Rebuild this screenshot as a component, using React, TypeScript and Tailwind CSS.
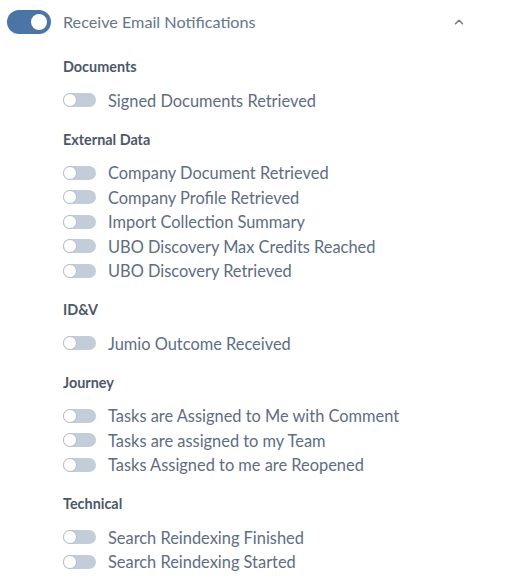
import { ChevronUp } from "lucide-react";

type Section = {
  title: string;
  items: string[];
};

const sections: Section[] = [
  { title: "Documents", items: ["Signed Documents Retrieved"] },
  {
    title: "External Data",
    items: [
      "Company Document Retrieved",
      "Company Profile Retrieved",
      "Import Collection Summary",
      "UBO Discovery Max Credits Reached",
      "UBO Discovery Retrieved",
    ],
  },
  { title: "ID&V", items: ["Jumio Outcome Received"] },
  {
    title: "Journey",
    items: [
      "Tasks are Assigned to Me with Comment",
      "Tasks are assigned to my Team",
      "Tasks Assigned to me are Reopened",
    ],
  },
  {
    title: "Technical",
    items: ["Search Reindexing Finished", "Search Reindexing Started"],
  },
];

const SmallToggle = () => (
  <div className="relative h-[14px] w-[33px] shrink-0 rounded-full bg-[#c2cdd9]">
    <div className="absolute left-0 top-0 h-[14px] w-[14px] rounded-full border border-[#b3bfcc] bg-white" />
  </div>
);

const MainToggle = () => (
  <div className="relative h-[24px] w-[44px] shrink-0 rounded-full bg-[#4a75a6]">
    <div className="absolute right-[2px] top-[2px] h-[20px] w-[20px] rounded-full border-2 border-[#4a75a6] bg-white" />
  </div>
);

export default function App() {
  return (
    <div className="min-h-screen w-[512px] bg-white font-['Lato','Liberation_Sans',sans-serif]">
      <div className="flex h-[44px] items-center pl-[7px] pr-[46px]">
        <MainToggle />
        <span className="ml-[12px] flex-1 text-[16.2px] text-[#66768a]">
          Receive Email Notifications
        </span>
        <ChevronUp size={14} strokeWidth={2.5} className="text-[#757575]" />
      </div>

      <div className="flex flex-col gap-[17px] pl-[63px] pt-[13px]">
        {sections.map((section) => (
          <div key={section.title} className="flex flex-col">
            <h3 className="flex h-[20px] items-center text-[14.4px] font-bold text-[#4b5869]">
              {section.title}
            </h3>
            <div className="mt-[11px] flex flex-col">
              {section.items.map((item) => (
                <div key={item} className="flex h-[24.5px] items-center gap-[12px]">
                  <SmallToggle />
                  <span className="mt-[2px] text-[16.4px] text-[#5d6d82]">{item}</span>
                </div>
              ))}
            </div>
          </div>
        ))}
      </div>
    </div>
  );
}
